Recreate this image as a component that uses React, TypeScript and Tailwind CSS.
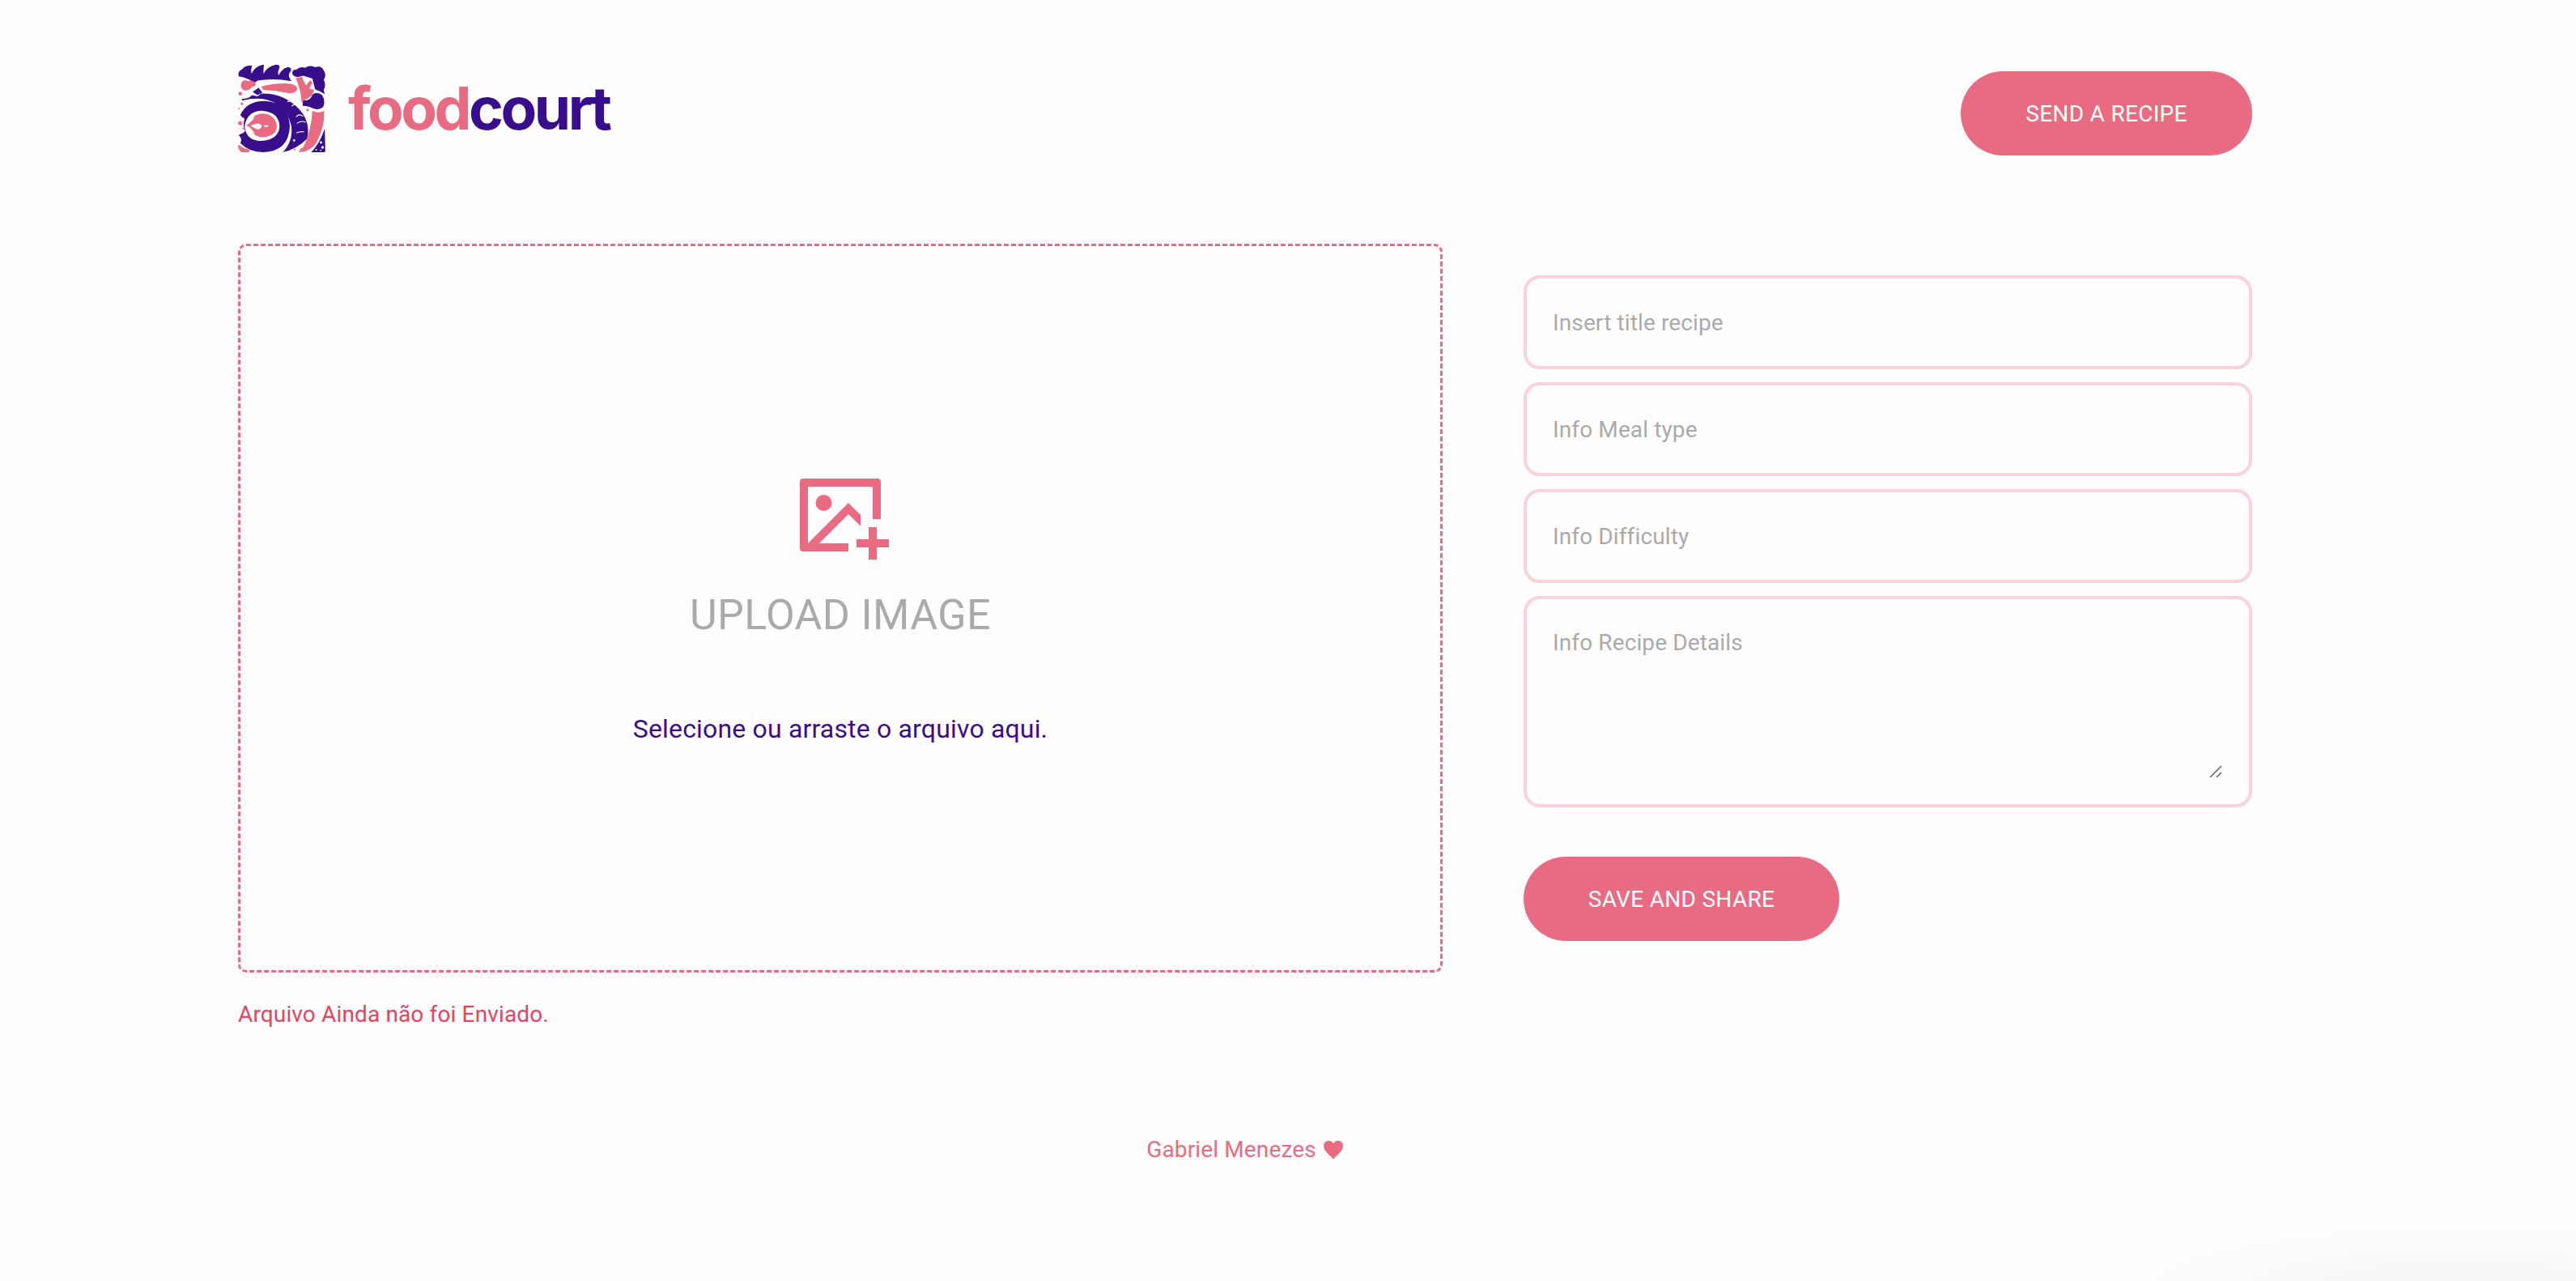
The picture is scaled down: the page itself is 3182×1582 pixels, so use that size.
const PINK = "#e96b82";
const PURPLE = "#380e8c";

function LogoMark() {
  return (
    <svg viewBox="28 15 324 325" className="h-[108px] w-[108px] shrink-0">
      <path fill={PURPLE} d="M30 58 Q26 38 42 33 Q52 16 80 18 Q74 32 78 48 Q90 20 124 14 Q122 30 122 48 Q140 18 172 14 Q186 16 180 30 Q174 42 178 54 Q192 28 212 24 Q228 24 224 38 Q214 46 218 62 L226 76 Q160 64 100 74 L90 82 Q60 62 30 58 Z" />
      <path fill={PURPLE} d="M230 50 Q226 32 246 32 Q258 20 276 26 Q298 14 314 24 Q338 16 346 36 Q358 54 346 70 Q356 92 346 108 L350 124 Q330 112 314 106 L304 66 L270 56 Q240 66 230 50 Z" />
      <path fill={PURPLE} d="M268 146 Q296 152 304 126 Q322 112 340 128 Q354 150 344 172 Q326 186 304 176 Q286 166 268 168 Z" />
      <path fill={PINK} d="M242 64 L266 60 Q272 78 280 92 L296 72 L304 82 L292 104 L310 108 Q308 125 296 134 Q280 142 264 156 Q262 110 242 64 Z" />
      <path fill={PINK} d="M40 82 Q50 66 64 76 Q76 70 92 80 Q98 96 80 96 Q70 112 50 110 Q34 102 40 82 Z" />
      <path fill={PINK} d="M114 96 Q150 84 205 84 Q244 84 248 104 Q242 124 214 120 Q170 110 122 108 Z" />
      <path fill={PURPLE} d="M82 116 L104 100 L118 118 L100 128 Z" />
      <path fill={PURPLE} d="M42 142 Q66 142 80 128 L100 132 L114 122 Q204 120 262 188 Q298 236 284 290 Q246 328 194 340 Q232 302 226 244 Q208 158 122 142 Q84 138 42 148 Z" />
      <g fill="none" stroke="#fffdfd" strokeWidth="3.5" strokeLinecap="round">
        <path d="M212 152 Q224 146 232 156" />
        <path d="M228 168 Q240 156 250 168" />
        <path d="M244 208 Q256 196 268 206" />
        <path d="M248 232 Q262 222 278 228" />
        <path d="M246 268 Q258 262 272 264" />
      </g>
      <circle cx="236" cy="296" r="4" fill="#fffdfd" />
      <path fill={PURPLE} fillRule="evenodd" d="M36 202 Q60 150 126 150 Q216 154 220 244 Q216 338 120 340 Q70 340 36 306 Q46 292 30 276 Q50 268 54 262 Q44 244 52 214 Q42 210 36 202 Z M112 186 Q60 190 52 244 Q58 298 112 298 Q180 294 182 242 Q178 188 112 186 Z" />
      <path fill={PINK} fillRule="evenodd" d="M58 240 Q84 226 90 204 Q134 184 164 218 Q180 244 164 268 Q128 296 90 276 Q84 252 58 240 Z M74 242 Q90 252 102 256 Q120 252 114 238 Q100 226 74 242 Z M122 243 Q132 236 142 243 Q132 250 122 243 Z" />
      <g fill={PINK}>
        <circle cx="36" cy="122" r="7" />
        <circle cx="42" cy="160" r="5" />
        <circle cx="31" cy="178" r="3" />
        <circle cx="36" cy="232" r="8" />
        <circle cx="46" cy="252" r="3" />
        <circle cx="286" cy="183" r="5" />
        <circle cx="238" cy="330" r="3.5" />
      </g>
      <path fill={PINK} d="M28 312 Q48 326 72 332 L68 340 L40 340 Q28 332 28 312 Z" />
      <path fill={PINK} d="M304 186 Q328 198 348 186 Q350 250 318 306 Q292 340 254 340 Q256 328 270 322 Q300 262 304 186 Z" />
      <path fill={PURPLE} d="M350 252 L352 336 Q352 340 346 340 L300 340 Q332 306 350 252 Z" />
      <g fill="#fffdfd">
        <circle cx="336" cy="304" r="4.5" />
        <circle cx="342" cy="322" r="5" />
        <circle cx="318" cy="331" r="3" />
        <circle cx="335" cy="333" r="2.5" />
      </g>
    </svg>
  );
}

function UploadIcon() {
  return (
    <svg viewBox="0 0 22 20" className="ml-[10px] h-[100px] w-[110px]" fill={PINK}>
      <path d="M0.8 0 H19.2 Q20 0 20 0.8 V10 H18 V2 H2 V16 H12 V18 H0.8 Q0 18 0 17.2 V0.8 Q0 0 0.8 0 Z" />
      <path d="M2 16 L12 6 L15 9 V11.7 L12 8.8 L4.8 16 Z" />
      <circle cx="5.9" cy="6" r="2" />
      <path d="M17 12 H19 V15 H22 V17 H19 V20 H17 V17 H14 V15 H17 Z" />
    </svg>
  );
}

const fieldClass =
  "w-full h-[116px] rounded-[20px] border-4 border-[#f9d2da] bg-transparent px-[32px] text-[28px] tracking-[0.12px] outline-none placeholder:text-[#aaaaaa]";

export default function App() {
  return (
    <div className="h-[1582px] w-full overflow-hidden bg-[#fffdfd] bg-[radial-gradient(ellipse_440px_90px_at_3040px_1595px,#f5f5f5,#fffdfd00)] pl-[294px] pt-[80px] font-['Roboto',sans-serif]">
      <div className="w-[2488px]">
        <header className="flex h-[112px] items-start justify-between">
          <div className="flex items-start">
            <LogoMark />
            <div className="ml-[28px] mt-[8px] font-['Inter',sans-serif] text-[73px] font-bold leading-[92px] tracking-[-3.5px]">
              <span className="text-[#e96b82]">food</span>
              <span className="text-[#380e8c]">court</span>
            </div>
          </div>
          <button className="mt-[8px] h-[104px] w-[360px] rounded-full bg-[#e96b82] pt-[1px] text-[28px] font-normal tracking-[0.3px] text-white">
            SEND A RECIPE
          </button>
        </header>

        <main className="mt-[109px] flex gap-[100px]">
          <div className="w-[1488px]">
            <div className="flex h-[900px] flex-col items-center rounded-[10px] border-[3px] border-dashed border-[#e96b82] pt-[287px]">
              <UploadIcon />
              <p className="mt-[39px] text-[52px] font-normal leading-[60px] tracking-[0.35px] text-[#aaaaaa]">UPLOAD IMAGE</p>
              <p className="mt-[90px] text-[32px] leading-[40px] tracking-[0.17px] text-[#380e8c]">Selecione ou arraste o arquivo aqui.</p>
            </div>
            <p className="mt-[34px] text-[28px] leading-[36px] tracking-[0.14px] text-[#e8435f]">Arquivo Ainda não foi Enviado.</p>
          </div>

          <form className="w-[900px] pt-[39px]">
            <div className="flex flex-col gap-[16px]">
              <input className={fieldClass} placeholder="Insert title recipe" />
              <input className={fieldClass} placeholder="Info Meal type" />
              <input className={fieldClass} placeholder="Info Difficulty" />
              <div className="relative h-[261px]">
                <textarea
                  className="block h-[261px] w-full resize-none rounded-[20px] border-4 border-[#f9d2da] bg-transparent px-[32px] py-[37px] text-[28px] leading-[33px] tracking-[0.12px] outline-none placeholder:text-[#aaaaaa]"
                  placeholder="Info Recipe Details"
                />
                <svg className="absolute bottom-[36px] right-[37px] h-[16px] w-[16px]" viewBox="0 0 16 16" fill="none" stroke="#666666" strokeWidth="1.6">
                  <path d="M1 15 L15 1" />
                  <path d="M9 15 L15 9" />
                </svg>
              </div>
            </div>
            <button type="button" className="mt-[61px] h-[104px] w-[390px] rounded-full bg-[#e96b82] pt-[1px] text-[28px] font-normal tracking-[0.3px] text-white">
              SAVE AND SHARE
            </button>
          </form>
        </main>

        <footer className="mt-[131px] flex items-center justify-center text-[28px] leading-[36px] tracking-[0.14px] text-[#e96b82]">
          <span>Gabriel Menezes</span>
          <svg viewBox="0 0 24 24" className="ml-[8px] h-[26px] w-[26px]" fill="#e96b82">
            <path d="M12 22.5 C9 18.5 1 14 1 7.5 C1 3.5 4 1.5 6.8 1.5 C9 1.5 11 2.8 12 5 C13 2.8 15 1.5 17.2 1.5 C20 1.5 23 3.5 23 7.5 C23 14 15 18.5 12 22.5 Z" />
          </svg>
        </footer>
      </div>
    </div>
  );
}
